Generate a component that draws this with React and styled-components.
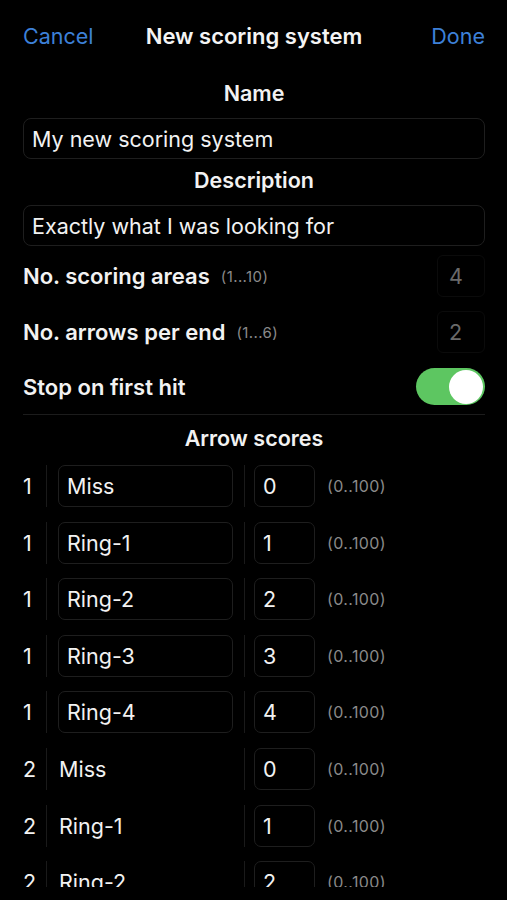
import React, { useState } from 'react'
import styled, { createGlobalStyle } from 'styled-components'

const GlobalStyle = createGlobalStyle`
    body {
        margin: 0;
        background: #000;
        font-family: Inter, "Liberation Sans", sans-serif;
        color: #f2f2f2;
    }
`
const Page = styled.div`
    width: 507px;
    height: 900px;
    overflow: hidden;
    background: #000;
`
const Nav = styled.div`
    height: 72px;
    display: flex;
    align-items: center;
    justify-content: space-between;
    padding: 0 22px 0 23px;
`
const NavButton = styled.span`
    color: #3d80d8;
    font-size: 21.5px;
    width: 90px;
    text-align: ${p => p.$right ? 'right' : 'left'};
`
const Title = styled.span`
    font-size: 22px;
    font-weight: 600;
    color: #f4f4f4;
`
const Content = styled.div`
    height: 815px;
    overflow: hidden;
    padding: 0 22px 0 23px;
`
const Label = styled.div`
    font-size: 21.5px;
    font-weight: 600;
    line-height: 24px;
    text-align: center;
    margin-top: ${p => p.$top}px;
`
const TextField = styled.div`
    height: 41px;
    box-sizing: border-box;
    border: 1px solid #1e1e1e;
    border-radius: 8px;
    margin-top: 13px;
    padding: 0 8px;
    display: flex;
    align-items: center;
    font-size: 21.5px;
`
const SettingRow = styled.div`
    display: flex;
    align-items: center;
    height: ${p => p.$h || 42}px;
    margin-top: ${p => p.$top}px;
`
const SettingLabel = styled.span`
    font-size: 22px;
    font-weight: 600;
`
const Hint = styled.span`
    font-size: 15px;
    letter-spacing: 0.4px;
    color: #8a8a8a;
    margin-left: 11px;
`
const NumberField = styled.div`
    margin-left: auto;
    width: 48px;
    height: 42px;
    box-sizing: border-box;
    border: 1px solid #0b0b0b;
    border-radius: 6px;
    display: flex;
    align-items: center;
    padding-left: 11px;
    font-size: 21.5px;
    color: #6a6a6a;
`
const Toggle = styled.div`
    margin-left: auto;
    width: 69px;
    height: 37px;
    border-radius: 19px;
    background: #5dc661;
    display: flex;
    align-items: center;
    justify-content: ${p => p.$on ? 'flex-end' : 'flex-start'};
    padding: 0 2px;
    box-sizing: border-box;
`
const Knob = styled.div`
    width: 34px;
    height: 34px;
    border-radius: 50%;
    background: #fff;
`
const Divider = styled.div`
    height: 1px;
    background: #1c1c1c;
    margin-top: 9px;
`
const ScoreList = styled.div`
    margin-top: 15px;
    display: flex;
    flex-direction: column;
    gap: 14.6px;
`
const ScoreRow = styled.div`
    display: flex;
    align-items: center;
    height: 42px;
`
const Index = styled.span`
    width: 23px;
    font-size: 21.5px;
`
const VLine = styled.div`
    width: 1px;
    height: 42px;
    background: #1a1a1a;
`
const Cell = styled.div`
    box-sizing: border-box;
    height: 42px;
    display: flex;
    align-items: center;
    font-size: 21.5px;
    width: ${p => p.$w}px;
    margin-left: ${p => p.$ml}px;
    border: 1px solid ${p => p.$boxed ? '#1e1e1e' : 'transparent'};
    border-radius: 7px;
    padding-left: ${p => p.$boxed ? 8 : 0}px;
`
const Range = styled.span`
    font-size: 16px;
    letter-spacing: 0.4px;
    color: #8a8a8a;
    margin-left: 12px;
`

const scores = [
    { end: 1, name: 'Miss', value: 0, boxed: true },
    { end: 1, name: 'Ring-1', value: 1, boxed: true },
    { end: 1, name: 'Ring-2', value: 2, boxed: true },
    { end: 1, name: 'Ring-3', value: 3, boxed: true },
    { end: 1, name: 'Ring-4', value: 4, boxed: true },
    { end: 2, name: 'Miss', value: 0 },
    { end: 2, name: 'Ring-1', value: 1 },
    { end: 2, name: 'Ring-2', value: 2 },
    { end: 2, name: 'Ring-3', value: 3 },
]

const App = () => {
    const [stop, setStop] = useState(true)
    return (
        <Page>
            <GlobalStyle />
            <Nav>
                <NavButton>Cancel</NavButton>
                <Title>New scoring system</Title>
                <NavButton $right>Done</NavButton>
            </Nav>
            <Content>
                <Label $top={9}>Name</Label>
                <TextField>My new scoring system</TextField>
                <Label $top={9}>Description</Label>
                <TextField>Exactly what I was looking for</TextField>
                <SettingRow $top={9}>
                    <SettingLabel>No. scoring areas</SettingLabel>
                    <Hint>(1...10)</Hint>
                    <NumberField>4</NumberField>
                </SettingRow>
                <SettingRow $top={14}>
                    <SettingLabel>No. arrows per end</SettingLabel>
                    <Hint>(1...6)</Hint>
                    <NumberField>2</NumberField>
                </SettingRow>
                <SettingRow $top={15} $h={37}>
                    <SettingLabel>Stop on first hit</SettingLabel>
                    <Toggle $on={stop} onClick={() => setStop(!stop)}>
                        <Knob />
                    </Toggle>
                </SettingRow>
                <Divider />
                <Label $top={11}>Arrow scores</Label>
                <ScoreList>
                    {scores.map((s, i) => (
                        <ScoreRow key={i}>
                            <Index>{s.end}</Index>
                            <VLine />
                            <Cell $w={175} $ml={11} $boxed={s.boxed}>{s.name}</Cell>
                            <div style={{ width: 11 }} />
                            <VLine />
                            <Cell $w={61} $ml={9} $boxed>{s.value}</Cell>
                            <Range>(0..100)</Range>
                        </ScoreRow>
                    ))}
                </ScoreList>
            </Content>
        </Page>
    )
}

export default App
